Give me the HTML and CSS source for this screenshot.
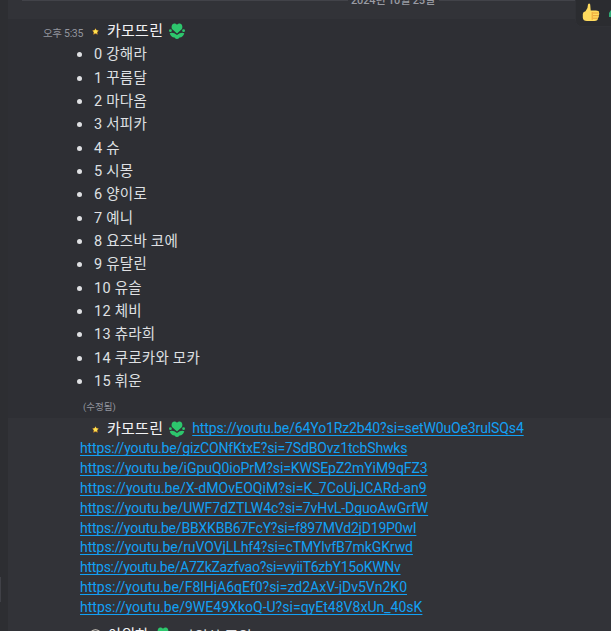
FILE: index.html
```
<!DOCTYPE html>
<html lang="ko">
<head>
<meta charset="utf-8">
<title>Chat</title>
<link rel="stylesheet" href="styles.css">
</head>
<body>
<svg class="defs" aria-hidden="true">
<symbol id="tulip" viewBox="0 0 16 16">
<path d="M8 10.400 3.300 6.300C1.700 4 3 .4 5.300.4 6.700.4 7.500 1 8 1.800 8.500 1 9.300.4 10.700.4 13 .4 14.300 4 12.700 6.300Z"/>
<circle cx="1.400" cy="7.700" r="1.400"/><circle cx="14.600" cy="7.700" r="1.400"/>
<path d="M.7 10.200Q4 8.800 8 12 12 8.800 15.300 10.200 14.200 14.300 10.500 14.500 9.300 16 8 16 6.700 16 5.500 14.500 1.800 14.300.7 10.200Z"/>
</symbol>
<symbol id="star" viewBox="0 0 10 10">
<path fill="#9b6528" d="M5 0 6.500 2.700 10 3.200 8 6 8.700 9.600 5 8.500 1.300 9.600 2 6 0 3.200 3.500 2.700Z"/>
<path fill="#ffe24d" d="M5 1.200 6.300 3.300 8.800 3.900 7.100 5.900 7.400 8.200 5 7.500 2.600 8.200 2.900 5.900 1.200 3.900 3.700 3.300Z"/>
</symbol>
</svg>
<div class="app">
<aside class="rail"><i class="thumb"></i></aside>
<main class="chat">
<div class="divider"><span>2024년 10월 25일</span></div>
<section class="message hovered">
<header class="author"><time>오후 5:35</time><svg class="star"><use href="#star"/></svg><b>카모뜨린</b><svg class="tulip"><use href="#tulip"/></svg></header>
<ul class="names">
<li>0 강해라</li><li>1 꾸름달</li><li>2 마다옴</li><li>3 서피카</li><li>4 슈</li><li>5 시몽</li><li>6 양이로</li><li>7 예니</li><li>8 요즈바 코에</li><li>9 유달린</li><li>10 유슬</li><li>12 체비</li><li>13 츄라희</li><li>14 쿠로카와 모카</li><li>15 휘운</li>
</ul>
<small class="edited">(수정됨)</small>
</section>
<section class="message links">
<div class="row first"><svg class="star"><use href="#star"/></svg><b>카모뜨린</b><svg class="tulip"><use href="#tulip"/></svg><a>https://youtu.be/64Yo1Rz2b40?si=setW0uOe3rulSQs4</a></div>
<div class="row"><a>https://youtu.be/gizCONfKtxE?si=7SdBOvz1tcbShwks</a></div>
<div class="row"><a>https://youtu.be/iGpuQ0ioPrM?si=KWSEpZ2mYiM9qFZ3</a></div>
<div class="row"><a>https://youtu.be/X-dMOvEOQiM?si=K_7CoUjJCARd-an9</a></div>
<div class="row"><a>https://youtu.be/UWF7dZTLW4c?si=7vHvL-DguoAwGrfW</a></div>
<div class="row"><a>https://youtu.be/BBXKBB67FcY?si=f897MVd2jD19P0wI</a></div>
<div class="row"><a>https://youtu.be/ruVOVjLLhf4?si=cTMYlvfB7mkGKrwd</a></div>
<div class="row"><a>https://youtu.be/A7ZkZazfvao?si=vyiiT6zbY15oKWNv</a></div>
<div class="row"><a>https://youtu.be/F8lHjA6qEf0?si=zd2AxV-jDv5Vn2K0</a></div>
<div class="row"><a>https://youtu.be/9WE49XkoQ-U?si=qyEt48V8xUn_40sK</a></div>
</section>
<section class="message next"><svg class="face" viewBox="0 0 14 14"><circle cx="7" cy="7" r="6.200"/></svg><b>아의하</b><svg class="tulip"><use href="#tulip"/></svg><span>아의하 주의</span></section>
</main>
<div class="reactions">
<svg class="like" viewBox="0 0 18 19"><path fill="#ffdb5e" d="M6 1.500Q7.200-.3 8.200 1.500L8.700 7.500H14Q17.500 7.500 17 9.700 17.700 11 16.700 12.200 17.200 14 16 15 16 18 12.500 18H5Q1 18 .8 14.500V11Q.8 9 3.500 8.300 6 6 6 1.500Z"/><path fill="none" stroke="#e59a34" stroke-width=".9" d="M10.200 9V16.800M11 10H16.500M11 12.700H16.300M11 15.200H15.700"/></svg>
<svg class="green" viewBox="0 0 8 16"><path fill="#2faa75" d="M3 1H8V14H0V10L2 7Z"/><path fill="#a9e5da" d="M3 4H6V8H3Z"/></svg>
</div>
</div>
</body>
</html>
```
FILE: styles.css
```
* { box-sizing: border-box; }
body { margin: 0; background: #323338; color: #dfe0e3; font-family: Roboto, "Noto Sans CJK KR", sans-serif; font-size: 15px; }
.defs { position: absolute; width: 0; height: 0; }
.app { position: relative; display: flex; width: 611px; height: 631px; overflow: hidden; }
.rail { width: 8px; background: #2d2e32; padding-top: 577px; }
.thumb { display: block; width: 1px; height: 25px; background: #404147; }
.chat { flex: 1; min-width: 0; }
.divider { height: 19px; margin-left: 14px; display: flex; align-items: flex-start; color: #999ba3; font-size: 11px; font-weight: 500; line-height: 14px; }
.divider::before, .divider::after { content: ""; height: 1px; background: #424349; }
.divider::before { width: 326px; }
.divider::after { flex: 1; }
.divider span { margin: -6px 4px 0 3px; width: 84px; white-space: nowrap; letter-spacing: -.15px; }
.message { white-space: nowrap; }
.hovered { height: 399px; background: #2e2f34; }
b { color: #f3f3f5; font-weight: 400; line-height: 22px; letter-spacing: .25px; }
.author { display: flex; align-items: center; height: 24px; padding-left: 35px; }
time { width: 49px; color: #92959e; font-size: 10.5px; letter-spacing: -.3px; padding-top: 2px; }
.star { width: 7px; height: 7px; margin-right: 8px; flex: none; }
.tulip { width: 16px; height: 16px; fill: #2dc76d; margin-left: 6px; flex: none; }
.names { margin: 0; padding: 0 0 0 68px; list-style: none; }
.names li { display: flex; align-items: center; height: 23.37px; line-height: 23px; font-size: 14.5px; letter-spacing: .25px; }
.names li::before { content: ""; width: 5px; height: 5px; margin: 0 12px 0 1px; border-radius: 50%; background: #dfe0e3; }
.edited { display: block; margin: 7px 0 0 75px; color: #92959e; font-size: 9.500px; line-height: 14px; }
.links { padding: 0 0 0 72px; height: 202px; }
.row { height: 19.9px; line-height: 19.9px; display: flex; align-items: center; }
.first { padding: 1px 0 0 12px; height: 21px; }
.first a { margin-left: 7px; }
a { color: #12a0f4; font-size: 14px; text-decoration: underline; text-decoration-thickness: 1px; text-underline-offset: 2px; text-decoration-skip-ink: none; }
.row:nth-child(1) a { letter-spacing: -.12px; }
.row:nth-child(2) a { letter-spacing: -.145px; }
.row:nth-child(3) a { letter-spacing: -.06px; }
.row:nth-child(4) a { letter-spacing: .07px; }
.row:nth-child(5) a { letter-spacing: -.085px; }
.row:nth-child(6) a { letter-spacing: -.19px; }
.row:nth-child(7) a { letter-spacing: -.085px; }
.row:nth-child(8) a { letter-spacing: -.27px; }
.row:nth-child(10) a { letter-spacing: .02px; }
.next { display: flex; align-items: center; height: 22px; padding: 8px 0 0 81px; }
.face { width: 13px; height: 13px; margin-right: 6px; fill: none; stroke: #d6cfc4; stroke-width: 1.2; }
.next b, .next span { letter-spacing: -.3px; }
.next .tulip { margin: 0 10px 0 6px; }
.reactions { position: absolute; top: -8px; left: 575px; width: 50px; height: 35px; padding: 10px 0 0 6px; display: flex; gap: 9px; border: 1px solid #303136; border-radius: 7px; background: #2b2c30; }
.like { width: 18px; height: 19px; }
.green { width: 8px; height: 16px; flex: none; }
```
